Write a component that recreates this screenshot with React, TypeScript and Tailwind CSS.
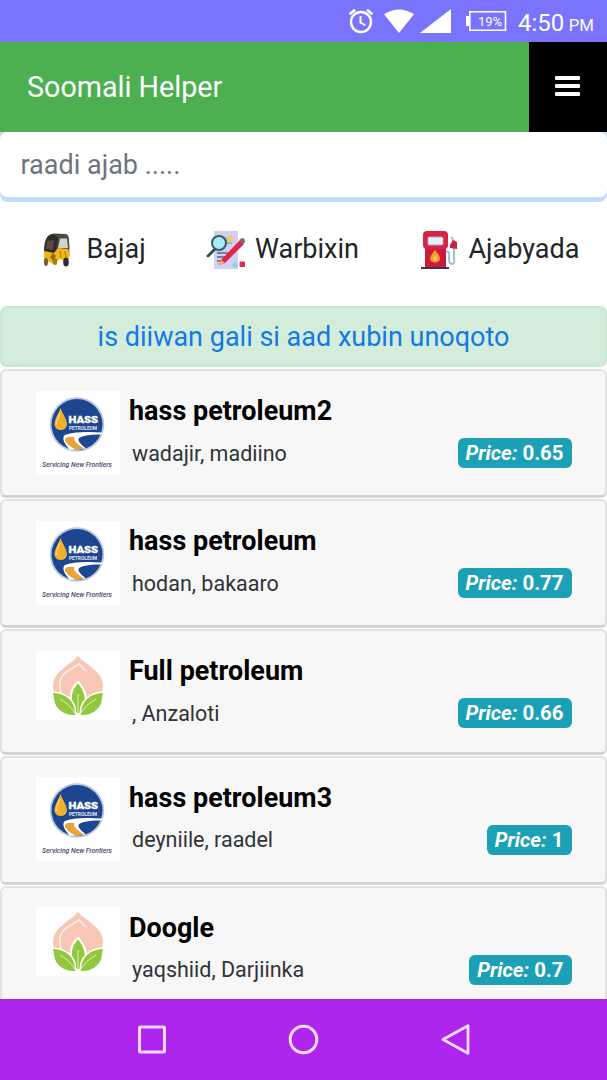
import React from "react";

type Station = {
  name: string;
  place: string;
  price: string;
  logo: "hass" | "leaf";
};

const stations: Station[] = [
  { name: "hass petroleum2", place: "wadajir, madiino", price: "0.65", logo: "hass" },
  { name: "hass petroleum", place: "hodan, bakaaro", price: "0.77", logo: "hass" },
  { name: "Full petroleum", place: ", Anzaloti", price: "0.66", logo: "leaf" },
  { name: "hass petroleum3", place: "deyniile, raadel", price: "1", logo: "hass" },
  { name: "Doogle", place: "yaqshiid, Darjiinka", price: "0.7", logo: "leaf" },
];

function StatusBar() {
  return (
    <div className="flex h-[42px] shrink-0 items-center bg-[#7974fb] pl-[348px] text-white">
      <svg className="h-[26px] w-[26px] shrink-0" viewBox="0 0 26 26" fill="none" stroke="white">
        <circle cx="13" cy="14" r="10" strokeWidth="2.4" />
        <path d="M12.5 8v6.5l4.8 3" strokeWidth="2" />
        <path d="M1.6 6.3 7 1.8M24.4 6.3 19 1.8" strokeWidth="2.6" />
      </svg>
      <svg className="ml-[10px] h-[24px] w-[30px] shrink-0" viewBox="0 0 30 24">
        <path d="M0 5.2Q15-4.2 30 5.2L15 24Z" fill="white" />
      </svg>
      <svg className="ml-[6px] h-[24px] w-[31px] shrink-0" viewBox="0 0 31 24">
        <path d="M31 0V24H0Z" fill="white" />
      </svg>
      <svg className="ml-[15px] h-[22px] w-[41px] shrink-0" viewBox="0 0 41 22">
        <path d="M0 6h3v10H0z" fill="white" />
        <path d="M3.8 1.8H39.5V20.2H3.8Z" fill="none" stroke="white" strokeWidth="1.6" />
        <text x="24" y="15.6" fontSize="13" textAnchor="middle" fill="white" className="font-['Roboto',sans-serif]">19%</text>
      </svg>
      <div className="ml-[11px] mt-[3px] flex items-baseline whitespace-nowrap leading-none">
        <span className="text-[24px]">4:50</span>
        <span className="ml-[4.5px] text-[16.8px]">PM</span>
      </div>
    </div>
  );
}

function TukTuk() {
  return (
    <svg className="h-[40px] w-[34px] shrink-0" viewBox="0 0 34 40">
      <path d="M6 8Q7 4 13 3.5L25 4Q28 5 28 10L28.5 18 28 27H5Z" fill="#4d4b42" />
      <path d="M5 9Q3 14 3 22L5 26 14 27 17 9Q16 5 12 4.5Q7 5 5 9Z" fill="#2d2c2a" />
      <path d="M6 11 13 10 12 20 5 19Z" fill="#5b4744" />
      <path d="M19 8.500H26L27 18H17Z" fill="#d3d3c9" />
      <path d="M3 21 13 23 17 18 27 19 29 24 28 29 25 31 19 29 13 34 3 30Z" fill="#f0b915" />
      <path d="M12 23 15 26 12 31 9 27Z" fill="#8f6d16" />
      <path d="M19 21 20 28M24 21 25 27" stroke="#b28618" strokeWidth="1.2" />
      <ellipse cx="5" cy="32" rx="2" ry="4" fill="#6a5d40" />
      <ellipse cx="14" cy="31.5" rx="2.3" ry="3.5" fill="#a87e1a" />
      <ellipse cx="25" cy="32" rx="2.8" ry="4.5" fill="#2d2b2b" />
    </svg>
  );
}

function Report() {
  return (
    <svg className="h-[40px] w-[40px] shrink-0" viewBox="0 0 40 40">
      <path d="M8 1H32V39H8Z" fill="#d2d0ef" />
      <path d="M20 7h6v7h-6z" fill="#72c3df" />
      <circle cx="24" cy="9" r="3.5" fill="#edc879" />
      <path d="M11 23H25M11 27H22M11 31H18" stroke="#60608b" strokeWidth="1.6" />
      <path d="m9 19-7 7" stroke="#344750" strokeWidth="2.8" strokeLinecap="round" />
      <circle cx="13" cy="13" r="7" fill="#a2ecf2" stroke="#3d5964" strokeWidth="2" />
      <path d="M15 30 34 10 38 14 19 33 13 35Z" fill="#dc2848" />
      <path d="m15 30 4 3-6 2z" fill="#f0b260" />
      <path d="m33 10 3-2q3 0 3 4l-2 2z" fill="#806089" />
      <rect x="33.5" y="31.5" width="5.500" height="5.5" rx="1" fill="#df2d51" />
      <circle cx="29" cy="35" r="2.5" fill="#82d1e6" />
    </svg>
  );
}

function Pump() {
  return (
    <svg className="h-[40px] w-[38px] shrink-0" viewBox="0 0 38 40">
      <path d="M5 17H26V37H5Z" fill="#c81d3e" />
      <rect x="3" y="1" width="25" height="18" rx="4" fill="#d62443" />
      <rect x="8" y="7" width="15" height="8" rx="1.2" fill="#e8f0f7" stroke="#b9a9be" strokeWidth="1" />
      <path d="M15 20Q8 28 11 31Q15 34 19 31Q22 28 15 20Z" fill="#f39a28" />
      <path d="M15 25Q11 30 15 31Q19 30 15 25Z" fill="#ffc552" />
      <path d="M1 37H29V39H1Z" fill="#443540" />
      <path d="M26 22Q30 20 29 29Q29 34 32 34Q35 34 34 27V18M31 7Q33 8 33 12" fill="none" stroke="#91bdcd" strokeWidth="1.8" />
      <path d="m33 10 4 2v7l-7-1v-3Z" fill="#c9213f" />
    </svg>
  );
}

function HassLogo() {
  return (
    <svg className="h-[84px] w-[84px] shrink-0 bg-white" viewBox="0 0 84 84">
      <circle cx="41" cy="33.5" r="27.3" fill="#b9c9e2" />
      <circle cx="41" cy="33.5" r="25.5" fill="#1d4590" />
      <path d="M66 41.5Q38 40 29 44Q24 48 34 59L50 57.5Q40 50 43 47Q49 43 66 43.5Z" fill="white" />
      <path d="M38 46Q31 45 29 48C28 51 35 57 41 59L48 57.5Q37 51 38 46Z" fill="#e9a43b" />
      <path d="M24.5 17C22 24 18.5 28 18.5 34A6.4 6.4 0 0 0 31 34C31 28 27 24 24.5 17Z" fill="#efb12c" />
      <path d="M24 22C22 27 20 30 20 34" fill="none" stroke="#f9d66f" strokeWidth="1.3" />
      <text x="32.5" y="31.5" fontSize="9.500" fontWeight="900" textLength="29.5" lengthAdjust="spacingAndGlyphs" fill="white" stroke="white" strokeWidth="0.3" className="font-['Roboto',sans-serif]">HASS</text>
      <text x="33" y="38.5" fontSize="5.500" fontWeight="700" textLength="28" lengthAdjust="spacingAndGlyphs" fill="#e1e7f2" className="font-['Roboto',sans-serif]">PETROLEUM</text>
      <text x="6" y="75.5" fontSize="7.500" fontStyle="italic" fontWeight="500" textLength="70" lengthAdjust="spacingAndGlyphs" fill="#454967" className="font-['Roboto',sans-serif]">Servicing New Frontiers</text>
    </svg>
  );
}

function LeafLogo() {
  return (
    <svg className="h-[69px] w-[84px] shrink-0 bg-white" viewBox="0 0 84 69">
      <path d="M42 5C37 12 22 18 18 29Q15 37 20 46H64Q69 37 66 29C62 18 48 12 42 5Z" fill="#f8c6b5" />
      <path d="M25 41Q21 29 29 22L43 13L50 20" fill="none" stroke="#fff0e9" strokeWidth="1.6" />
      <path d="M42 31Q34 38 35 49Q36 57 40 63H44Q49 56 50 48Q49 38 42 31Z" fill="#91c83f" stroke="white" strokeWidth="2" />
      <path d="M16 41Q34 42 39 56L40 65Q23 65 18 52ZM68 41Q50 42 45 56L44 65Q61 65 66 52Z" fill="#91c83f" stroke="white" strokeWidth="1.6" />
      <path d="M42 43V63M24 48Q35 54 40 64M60 48Q49 54 44 64" fill="none" stroke="#dcefb8" strokeWidth="1" />
    </svg>
  );
}

function StationCard({ name, place, price, logo }: Station) {
  return (
    <article className={`flex shrink-0 rounded-[6px] border-2 border-[#e2e2e2] border-b-[#d2d2d2] bg-[#f7f7f7] pl-[34px] pr-[33.5px] pt-[19.5px] shadow-[0_1px_1px_#d8d8d8] ${logo === "leaf" ? "h-[124.5px]" : "h-[128px]"}`}>
      {logo === "hass" ? <HassLogo /> : <LeafLogo />}
      <div className="ml-[9px] flex-1 whitespace-nowrap">
        <h2 className="pt-[0.5px] text-[26.9px] font-bold leading-[40px] tracking-[0.04px] text-black">{name}</h2>
        <div className="mt-[6.5px] flex items-center justify-between">
          <p className="pl-[3px] text-[21.5px] leading-[31px] text-[#303338]">{place}</p>
          <span className="flex h-[30px] items-center rounded-[6px] bg-[#1ca0b5] px-[8px] pt-px text-[20.4px] font-bold text-white">
            <i>Price:</i>&nbsp;{price}
          </span>
        </div>
      </div>
    </article>
  );
}

export default function App() {
  return (
    <main className="flex h-[1080px] w-[607px] flex-col overflow-hidden bg-white font-['Roboto',sans-serif] text-[#212529]">
      <StatusBar />
      <header className="flex h-[90px] shrink-0 items-center justify-between bg-[#4caf50]">
        <h1 className="pl-[27px] pt-px text-[28.7px] text-white">Soomali Helper</h1>
        <button aria-label="Menu" className="flex h-full w-[78.5px] flex-col items-center justify-center gap-[3.5px] bg-black pb-[2px]">
          <span className="h-[4.5px] w-[25px] rounded-[1px] bg-white" />
          <span className="h-[4.5px] w-[25px] rounded-[1px] bg-white" />
          <span className="h-[4.5px] w-[25px] rounded-[1px] bg-white" />
        </button>
      </header>
      <div className="h-[70px] shrink-0 rounded-b-[8px] bg-[#bfdcf8] pb-[5px]">
        <input aria-label="raadi ajab" placeholder="raadi ajab ....." className="h-full w-full rounded-[7px] bg-white pl-[20.5px] text-[27px] outline-none placeholder:text-[#6c757d]" />
      </div>
      <nav className="flex h-[104px] shrink-0 items-center pb-[8px] text-[27px]">
        <a className="ml-[41px] flex w-[165px] items-center gap-[11.5px]"><TukTuk /><span className="-mt-[2px]">Bajaj</span></a>
        <a className="flex w-[214px] items-center gap-[9px]"><Report /><span className="-mt-[2px]">Warbixin</span></a>
        <a className="flex items-center gap-[10.5px]"><Pump /><span className="-mt-[2px]">Ajabyada</span></a>
      </nav>
      <div className="mb-[2px] flex h-[61px] shrink-0 items-center justify-center rounded-[7px] border-2 border-[#c7e7cf] bg-[#d4edda] pt-[2px] text-[27px] text-[#1279e8]">
        is diiwan gali si aad xubin unoqoto
      </div>
      <section className="flex min-h-0 flex-1 flex-col gap-[2px] overflow-hidden">
        {stations.map((s) => <StationCard key={s.name} {...s} />)}
      </section>
      <footer className="flex h-[81px] shrink-0 items-center bg-[#ae25ee] pl-[137px]">
        <svg className="h-[30px] w-[30px]" viewBox="0 0 30 30"><rect x="2.5" y="2" width="25" height="25" rx="1" fill="none" stroke="#f8dcff" strokeWidth="3" /></svg>
        <svg className="ml-[121px] h-[32px] w-[32px]" viewBox="0 0 32 32"><circle cx="15.5" cy="15.5" r="13.3" fill="none" stroke="#f8dcff" strokeWidth="3" /></svg>
        <svg className="ml-[121px] h-[32px] w-[30px]" viewBox="0 0 30 32"><path d="M2 15.5 27 1.7V29.3Z" fill="none" stroke="#f8dcff" strokeWidth="2.8" strokeLinejoin="round" /></svg>
      </footer>
    </main>
  );
}
